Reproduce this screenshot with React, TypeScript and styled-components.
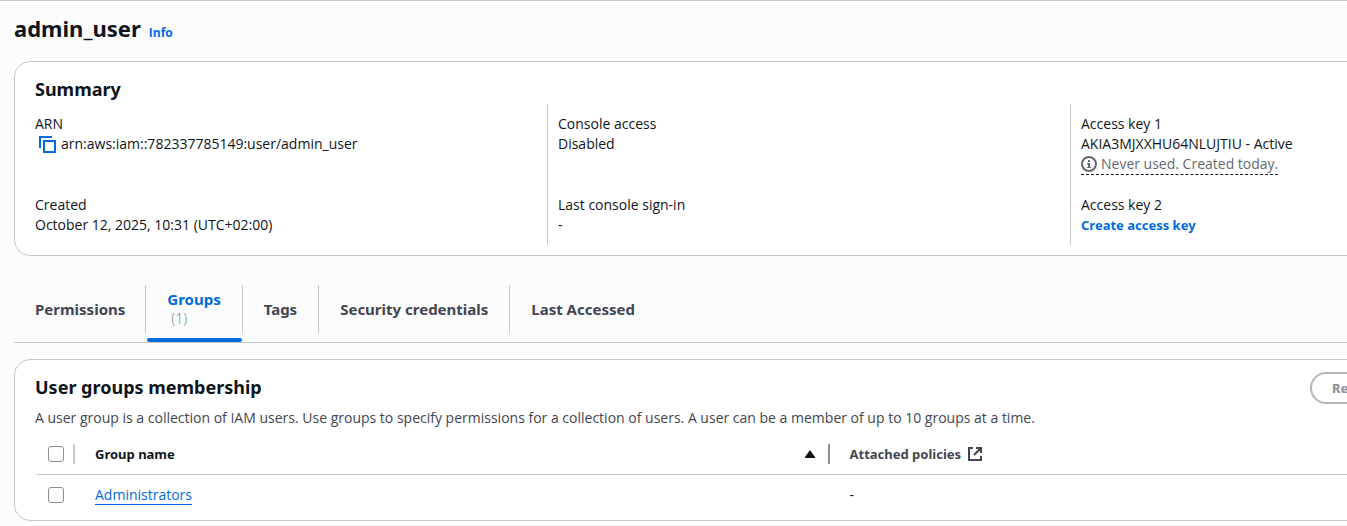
import React from "react";
import styled, { createGlobalStyle } from "styled-components";

const GlobalStyle = createGlobalStyle`
  *, *::before, *::after { box-sizing: border-box; }
  body {
    margin: 0;
    background: #fcfcfd;
    color: #0f141a;
    font: 400 14px/20px "Open Sans", "Noto Sans", sans-serif;
  }
  h1, h2, p, dl, dd { margin: 0; }
  h1, h2, th, button { font-family: "Noto Sans", "Open Sans", sans-serif; }
  button { cursor: pointer; }
`;

const Viewport = styled.div`
  overflow: hidden;
  border-top: 1px solid #c6c6cd;
`;

const Page = styled.main`
  margin: 0 -259px 0 14px;
  padding: 11px 0 5px;
`;

const TitleBar = styled.header`
  display: flex;
  align-items: baseline;
  gap: 8px;
  height: 49px;
`;

const Title = styled.h1`
  font-size: 22px;
  line-height: 32px;
  font-weight: 700;
`;

const InfoLink = styled.a`
  color: #006ce0;
  font-size: 12px;
  font-weight: 700;
  text-decoration: none;
`;

const Card = styled.section`
  background: #ffffff;
  border: 1px solid #c6c6cd;
  border-radius: 16px;
`;

const CardTitle = styled.h2`
  font-size: 18px;
  line-height: 24px;
  font-weight: 700;
`;

const SummaryHead = styled.div`
  padding: 15px 20px 3px;
`;

const Columns = styled.div`
  display: grid;
  grid-template-columns: repeat(3, 1fr);
  padding: 0 12px 10px 9px;
`;

const Column = styled.dl`
  display: flex;
  flex-direction: column;
  gap: 20px;
  padding: 10px;
  border-left: 1px solid #c6c6cd;
  &:first-child { border-color: transparent; }
`;

const Field = styled.div<{ $tall?: boolean }>`
  min-height: ${(p) => (p.$tall ? "61px" : "40px")};
`;

const Value = styled.dd`
  display: flex;
  align-items: center;
`;

const CopyButton = styled.button`
  display: flex;
  padding: 0 5px 0 4px;
  border: 0;
  background: none;
`;

const Hint = styled.dd`
  display: flex;
  width: fit-content;
  align-items: center;
  gap: 4px;
  color: #656871;
  border-bottom: 1px dashed #0f141a;
`;

const StrongLink = styled.a`
  color: #006ce0;
  font-family: "Noto Sans", "Open Sans", sans-serif;
  font-size: 13px;
  font-weight: 700;
  text-decoration: none;
`;

const TabBar = styled.div`
  display: flex;
  margin: 29px 0 16px;
  padding-bottom: 9px;
  border-bottom: 1px solid #c6c6cd;
`;

const Tab = styled.button<{ $active?: boolean }>`
  position: relative;
  height: 48px;
  padding: 0 21px;
  border: 0;
  border-right: 1px solid #c6c6cd;
  background: none;
  color: ${(p) => (p.$active ? "#006ce0" : "#424650")};
  font-size: 15px;
  line-height: 20px;
  font-weight: 700;
  text-align: left;
  &:first-child { padding-right: 20px; }
  &:last-child { border-color: transparent; }
  &::after {
    content: "";
    display: ${(p) => (p.$active ? "block" : "none")};
    position: absolute;
    left: 1px;
    right: 0;
    bottom: -9px;
    height: 4px;
    border-radius: 2px;
    background: #006ce0;
  }
`;

const Count = styled.span`
  display: block;
  padding-left: 4px;
  color: #8c8c94;
  font-size: 14px;
  font-weight: 300;
`;

const GroupsHead = styled.div`
  display: flex;
  justify-content: space-between;
  align-items: flex-start;
  padding: 12px 20px 0;
`;

const GroupsTitle = styled.div`
  padding-top: 3px;
`;

const Description = styled.p`
  margin-top: 9px;
  color: #424650;
`;

const Actions = styled.div`
  display: flex;
  gap: 12px;
`;

const PillButton = styled.button<{ $primary?: boolean }>`
  height: 32px;
  padding: 0 20px;
  border: 2px solid ${(p) => (p.$primary ? "#ff9900" : "#b4b4bb")};
  border-radius: 16px;
  background: ${(p) => (p.$primary ? "#ff9900" : "#ffffff")};
  color: ${(p) => (p.$primary ? "#0f141a" : "#8c8c94")};
  font-size: 13px;
  font-weight: 700;
`;

const Table = styled.table`
  width: calc(100% - 42px);
  margin: 6px 21px 0;
  border-collapse: collapse;
  table-layout: fixed;
  tbody td { height: 46px; padding-bottom: 5px; }
`;

const Head = styled.th<{ $sorted?: boolean }>`
  height: 40px;
  padding: 0 0 0 20px;
  border-bottom: 1px solid #c6c6cd;
  color: ${(p) => (p.$sorted ? "#0f141a" : "#424650")};
  font-size: 13px;
  font-weight: 700;
  text-align: left;
`;

const HeadInner = styled.div<{ $divider?: string }>`
  display: flex;
  align-items: center;
  height: 20px;
  gap: 6px;
  border-right: 2px solid ${(p) => p.$divider ?? "transparent"};
`;

const CheckHead = styled(Head)`
  width: 39px;
  padding-left: 12px;
`;

const Cell = styled.td<{ $check?: boolean }>`
  padding: 0 0 0 ${(p) => (p.$check ? "12px" : "20px")};
`;

const Checkbox = styled.input`
  display: block;
  appearance: none;
  width: 16px;
  height: 16px;
  margin: 0;
  border: 1px solid #8c8c94;
  border-radius: 3px;
  background: #ffffff;
`;

const SortIcon = styled.svg`
  margin-left: auto;
  margin-right: 13px;
`;

const GroupLink = styled.a`
  color: #006ce0;
  text-decoration: none;
  border-bottom: 1px solid #006ce0;
`;

const tabs = ["Permissions", "Groups", "Tags", "Security credentials", "Last Accessed"];

export default function App() {
  return (
    <Viewport>
      <GlobalStyle />
      <Page>
        <TitleBar>
          <Title>admin_user</Title>
          <InfoLink href="#info">Info</InfoLink>
        </TitleBar>

        <Card>
          <SummaryHead>
            <CardTitle>Summary</CardTitle>
          </SummaryHead>
          <Columns>
            <Column>
              <Field $tall>
                <dt>ARN</dt>
                <Value>
                  <CopyButton aria-label="Copy ARN">
                    <svg width="17" height="17" viewBox="0 0 17 17" fill="none" stroke="#006ce0" strokeWidth="2">
                      <path d="M1 12V1h12" />
                      <path d="M5 5h11v11H5z" />
                    </svg>
                  </CopyButton>
                  arn:aws:iam::782337785149:user/admin_user
                </Value>
              </Field>
              <Field>
                <dt>Created</dt>
                <Value>October 12, 2025, 10:31 (UTC+02:00)</Value>
              </Field>
            </Column>
            <Column>
              <Field $tall>
                <dt>Console access</dt>
                <Value>Disabled</Value>
              </Field>
              <Field>
                <dt>Last console sign-in</dt>
                <Value>-</Value>
              </Field>
            </Column>
            <Column>
              <Field $tall>
                <dt>Access key 1</dt>
                <Value>AKIA3MJXXHU64NLUJTIU - Active</Value>
                <Hint>
                  <svg width="16" height="16" viewBox="0 0 16 16" fill="none" stroke="#656871">
                    <circle cx="8" cy="8" r="7" strokeWidth="2" />
                    <path d="M8 4v2M8 7v5" strokeWidth="2" />
                    <path d="M6 7.5h2M6 11.5h4" />
                  </svg>
                  Never used. Created today.
                </Hint>
              </Field>
              <Field>
                <dt>Access key 2</dt>
                <Value>
                  <StrongLink href="#create">Create access key</StrongLink>
                </Value>
              </Field>
            </Column>
          </Columns>
        </Card>

        <TabBar role="tablist">
          {tabs.map((name) => (
            <Tab key={name} role="tab" aria-selected={name === "Groups"} $active={name === "Groups"}>
              {name}
              {name === "Groups" && <Count>(1)</Count>}
            </Tab>
          ))}
        </TabBar>

        <Card>
          <GroupsHead>
            <GroupsTitle>
              <CardTitle>User groups membership</CardTitle>
              <Description>
                A user group is a collection of IAM users. Use groups to specify permissions for a collection of users.
                A user can be a member of up to 10 groups at a time.
              </Description>
            </GroupsTitle>
            <Actions>
              <PillButton disabled>Remove</PillButton>
              <PillButton $primary>Add user to groups</PillButton>
            </Actions>
          </GroupsHead>
          <Table>
            <thead>
              <tr>
                <CheckHead>
                  <HeadInner $divider="#c6c6cd">
                    <Checkbox type="checkbox" aria-label="Select all groups" />
                  </HeadInner>
                </CheckHead>
                <Head $sorted aria-sort="ascending">
                  <HeadInner $divider="#8c8c94">
                    Group name
                    <SortIcon width="10" height="8" viewBox="0 0 10 8" fill="#0f141a">
                      <path d="M5 0l5 7v1H0V7z" />
                    </SortIcon>
                  </HeadInner>
                </Head>
                <Head>
                  <HeadInner>
                    Attached policies
                    <svg width="16" height="16" viewBox="0 0 16 16" fill="none" stroke="#424650" strokeWidth="2">
                      <path d="M6 2H2v12h12v-4M9 2h5v5M14 2L7 9" />
                    </svg>
                  </HeadInner>
                </Head>
              </tr>
            </thead>
            <tbody>
              <tr>
                <Cell $check>
                  <Checkbox type="checkbox" aria-label="Select Administrators" />
                </Cell>
                <Cell>
                  <GroupLink href="#administrators">Administrators</GroupLink>
                </Cell>
                <Cell>-</Cell>
              </tr>
            </tbody>
          </Table>
        </Card>
      </Page>
    </Viewport>
  );
}
